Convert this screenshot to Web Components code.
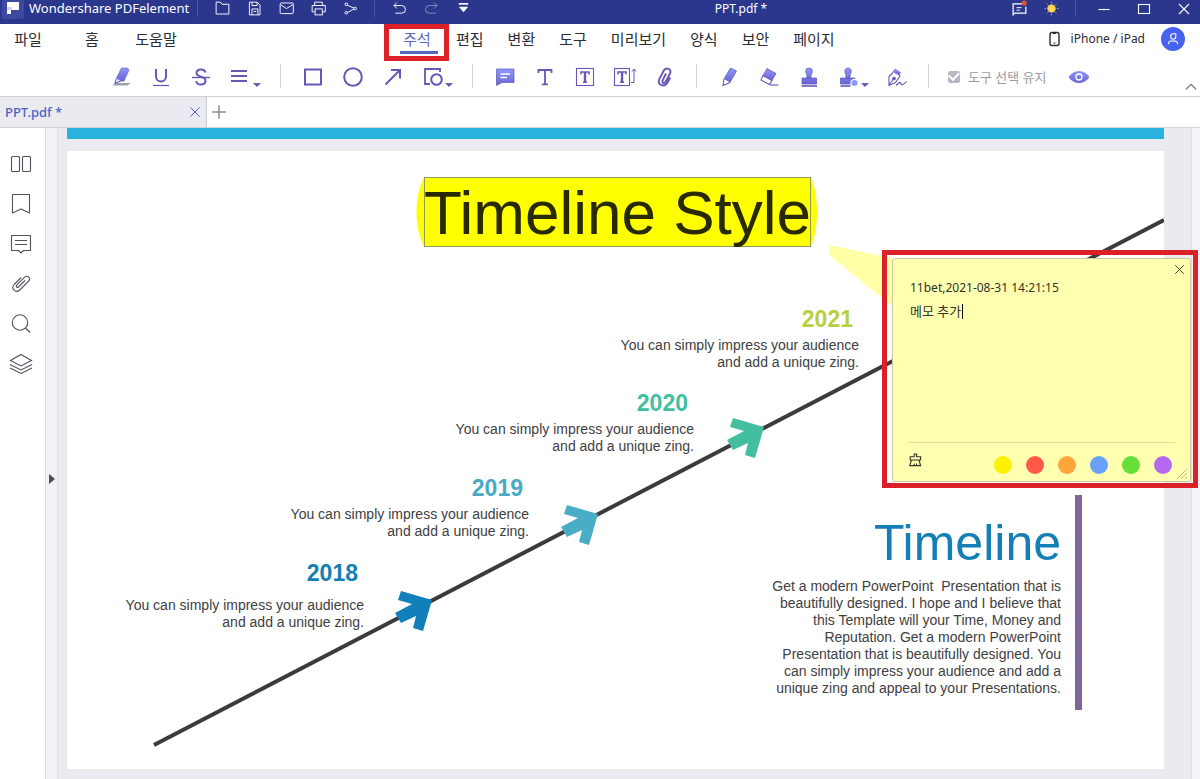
<!DOCTYPE html>
<html lang="ko">
<head>
<meta charset="utf-8">
<title>PPT.pdf * - Wondershare PDFelement</title>
<style>
  html, body { margin: 0; height: 100%; }
  body { font-family: "Noto Sans", "Noto Sans CJK KR", sans-serif; font-size: 13px; color: #2b2b33; background: #fff; }
</style>
</head>
<body>
<pdf-app></pdf-app>

<script>
const GRAD = '<defs><linearGradient id="g" x1="0" y1="0" x2="0" y2="1"><stop offset="0" stop-color="#8f97f6"/><stop offset="1" stop-color="#6b63d6"/></linearGradient></defs>';

/* Icon bodies on a 20 x 20 grid; stroke and fill come from the host's colour. */
const ICONS = {
  folder: '<path d="M2.500 16.500v-14h5l2 2.500h8v11.500z" stroke-linejoin="round"/>',
  save: '<path d="M4 17.500v-15h9l3.500 3.500v11.500z"/><path d="M7 2.500v4h6v-4M7 17.500v-7h7v7M9 13.500h3"/>',
  mail: '<rect x="2.500" y="3.500" width="15.500" height="12.500" rx="1.500"/><path d="M3 5.500l7 4.500 7.500-4.500"/>',
  print: '<path d="M5.500 6.500v-4h9v4M5.500 14h-3v-7.500h15.500v7.500h-3"/><rect x="6" y="10.500" width="8.500" height="7"/>',
  share: '<path d="M6 6l9 4-9 5"/><circle cx="5" cy="5" r="1.500" fill="#2a378d"/><circle cx="15.500" cy="10" r="1.500" fill="#2a378d"/><circle cx="5" cy="15" r="1.500" fill="#2a378d"/>',
  undo: '<path d="M7 3l-3.500 3.500 3.500 3.500M4 6.500h8.500a4.500 4.500 0 0 1 0 9h-7.500"/>',
  redo: '<path d="M13 3l3.500 3.500-3.500 3.500M16 6.500h-8.500a4.500 4.500 0 0 0 0 9h7.500" opacity=".45"/>',
  more: '<path d="M4.500 4.500h11" stroke-width="2"/><path d="M4.500 8h11l-5.500 6.500z" fill="currentColor" stroke="none"/>',
  message: '<path d="M13 4.500h-10.500v13l2-2h13v-8" stroke-width="1.400"/><path d="M6.500 9h6M6.500 12h4"/><circle cx="15.500" cy="3.500" r="3" fill="#e5532d" stroke="none"/>',
  sun: '<g stroke="#f3c24a"><circle cx="10" cy="10" r="4.500" fill="#ffd75c"/><path d="M10 2v1.500M10 16.500v1.500M2 10h1.500M16.500 10h1.500M4.300 4.300l1 1M14.700 14.700l1 1M15.700 4.300l-1 1M4.300 15.700l1-1"/></g>',
  minimize: '<path d="M4.500 10.500h11"/>',
  maximize: '<rect x="4.500" y="5.500" width="11" height="9"/>',
  close: '<path d="M5 5l10 10M15 5l-10 10"/>',
  phone: '<rect x="5" y="3.500" width="9" height="13" rx="2" stroke-width="1.400"/><path d="M8 4.500h3M8.500 14h2"/>',
  user: '<path d="M6.500 6a4 4 0 0 1 4-3.500h3.500v4a3.700 3.700 0 0 1-7.500 0zM3.500 17.500v-1a4 4 0 0 1 4-3.500h5a4 4 0 0 1 4 3.500v1" stroke-width="1.500"/>',
  highlight: GRAD + '<path d="M1 18.500l5-2.500h13.500l-3 2.500z" fill="#9ca0b4" stroke="none"/><path d="M10.500 1h6l1.500 2-5 11-5.500 0-2-3z" fill="url(#g)" stroke="#5c55b5" stroke-width=".6"/><path d="M5.500 11.500l-1.500 5 5.500-2.500" fill="#fff" stroke="#6a5ab8"/>',
  underline: '<path d="M5 2v7.500a5 5 0 0 0 10 0v-7.500" stroke-width="2"/><path d="M2 18.500h16" stroke-width="1.200"/>',
  strike: '<path d="M14.500 5.500c-.5-2-2-3-4.500-3s-4.500 1.300-4.500 3.500c0 5 9 2.500 9 7.500 0 2.500-2 4-4.500 4s-4.500-1.300-4.700-3.500" stroke-width="2"/><path d="M1 10.500h18" stroke-width="1.400"/>',
  lines: '<path d="M0 4h16M0 9h16M0 14h16" stroke-width="2"/>',
  square: '<rect x="2" y="2.500" width="16" height="15" stroke-width="2"/>',
  circle: '<circle cx="10" cy="10" r="8.800" stroke-width="2"/>',
  arrow: '<path d="M2.500 17.500l14.500-14.500M8 3h9v8.500" stroke-width="2"/>',
  shapes: '<path d="M17 5v-3h-15v15h5" stroke-width="1.800"/><circle cx="13.500" cy="12.500" r="5.300" stroke-width="2"/>',
  comment: GRAD + '<path d="M1.500 2h17.500v13.500h-12l-5.500 3z" fill="url(#g)" stroke="#5c55b5" stroke-width=".7"/><path d="M5.500 7h9.500M5.500 10.500h6.500" stroke="#fff" stroke-width="1.300"/>',
  text: '<path d="M3.500 6v-3h13v3M10 3v14M7 17.300h6" stroke-width="1.800"/>',
  textbox: '<rect x="1.500" y="1.500" width="17" height="17" stroke-width="1.100"/><path d="M6 7.500v-2.500h8v2.500M8 15.200h4" stroke-width="1.500"/><path d="M10 5v10" stroke-width="2.400"/>',
  textcall: '<rect x="-.5" y="1.500" width="15" height="17" stroke-width="1.100"/><path d="M3 7.500v-2.500h8v2.500M5 15.200h4" stroke-width="1.500"/><path d="M7 5v10" stroke-width="2.400"/><path d="M17 4.500l2-2.500 2 2.500M19 2v13.500h-3" stroke-width="1"/>',
  clip: '<path d="M11 6.500l-3.500 7c-.8 2.300 2 3.500 3.200 1.300l4.300-8.300c2-4.500-4-7-6.200-3l-4.600 8.800c-2.300 5.200 5 8.700 8 3.700l3-5.500" stroke-width="1.900"/>',
  pencil: GRAD + '<path d="M11.500 1l6 3-6.500 11.500-6-3.500z" fill="url(#g)" stroke="#5c55b5" stroke-width=".7"/><path d="M5 12l-1 6.500 7-3" fill="#fff"/>',
  eraser: GRAD + '<path d="M8 1.500l9 5-4 7-9-5z" fill="url(#g)" stroke="#5c55b5" stroke-width=".7"/><path d="M4 8.500l9 5-2.500 4-8.500-4.500z" fill="#fff"/><path d="M11 18h8.500"/>',
  stamp: GRAD + '<path d="M10 1a3.300 3.300 0 0 1 3.300 3.500c0 2-1.300 2-1.300 6.500h-4c0-4.500-1.300-4.500-1.300-6.500a3.300 3.300 0 0 1 3.300-3.500zM3 11h14.500v6h-14.500z" fill="url(#g)" stroke="#5c55b5" stroke-width=".7"/><path d="M2.500 19h15.500" stroke-width="1.600"/>',
  stampadd: GRAD + '<path d="M9 1a3 3 0 0 1 3.200 3.500c0 2-1.200 2-1.200 6.500h-4c0-4.500-1.200-4.500-1.200-6.500a3.200 3.200 0 0 1 3.200-3.500zM1.500 11h14.500v6h-14.500z" fill="url(#g)" stroke="#5c55b5" stroke-width=".7"/><path d="M1.500 19h10" stroke-width="1.600"/><circle cx="15.500" cy="16" r="3.600" fill="#8e9af2" stroke="#fff"/>',
  sign: GRAD + '<path d="M8 1.500l6 4-2 3-6.500-3.500z" fill="url(#g)" stroke="none"/><path d="M6 5.500l-4 4v9l6.500-3 4.500-6.500-1-1.500M2 18l4.500-6" /><circle cx="7" cy="11.500" r="1.300" fill="currentColor"/><path d="M9 18.500c3-3 5-4 5-2s2 2 5.500-2"/>',
  eye: GRAD + '<path d="M-.5 10c5.500-8 15.500-8 21 0-5.500 8-15.500 8-21 0z" fill="url(#g)" stroke="none"/><circle cx="10" cy="10" r="3" stroke="#fff" stroke-width="1.300"/>',
  chevron: '<path d="M4.500 12.500l5.500-5.500 5.500 5.500" stroke-width="1.400"/>',
  plus: '<path d="M10 2.500v15M2.500 10h15" stroke-width="1.600"/>',
  thumbs: '<rect x="0.500" y="2.500" width="8" height="15" rx="1"/><rect x="11.500" y="2.500" width="8" height="15" rx="1"/>',
  bookmark: '<path d="M1.500 .5h17v18.500l-8.500-4-8.500 4z" stroke-linejoin="round"/>',
  notes: '<path d="M.5 1.500h19v15h-7l-2.500 2.500-2.500-2.500h-7z" stroke-linejoin="round"/><path d="M4 6.500h12M4 10.500h12"/>',
  attach: '<path d="M14 6.500l-6.500 6.500c-1.200 1.200-3-.6-1.800-1.800l8-8c3-2.600 6.500 1 4 4l-9 8.800c-4 3.600-9.200-1.500-5.500-5.500l7-7"/>',
  search: '<circle cx="9" cy="8.500" r="7.700"/><path d="M14.500 14l4.500 4.500" stroke-width="1.300"/>',
  layers: '<path d="M10 .5l10.500 6-10.500 5.500-10.500-5.500zM-1 10.500l11 5.500 11-5.500M-1 14l11 5.500 11-5.500"/>',
  brush: '<path d="M9 6v-3.500h3v3.500h5v4h-13v-4zM5.500 10l-2 7h13.500l-2-7M8.500 17l1-2.500M12 17v-2.500" stroke-width="1.400"/>'
};

const RESET = `
  button, a { font: inherit; color: inherit; background: none; border: 0; padding: 0; margin: 0; text-decoration: none; cursor: pointer; display: inline-flex; align-items: center; justify-content: center; white-space: nowrap; }
`;

function define(name, html, setup) {
  const template = document.createElement('template');
  template.innerHTML = '<style>:host, * { box-sizing: border-box; }</style>' + html;
  customElements.define(name, class extends HTMLElement {
    connectedCallback() {
      if (this.shadowRoot) return;
      const content = template.content.cloneNode(true);
      if (setup) setup.call(this, content);
      this.attachShadow({ mode: 'open' }).append(content);
    }
  });
}

define('ui-icon', `
  <style>
    :host { display: inline-flex; flex: none; width: var(--icon-size, 20px); height: var(--icon-size, 20px); }
    svg { width: 100%; height: 100%; overflow: visible; fill: none; stroke: currentColor; stroke-width: 1.100; }
  </style>
  <svg viewBox="0 0 20 20" aria-hidden="true"></svg>`,
  function (root) { root.querySelector('svg').innerHTML = ICONS[this.getAttribute('name')] || ''; });

define('icon-button', `
  <style>${RESET}
    :host { display: inline-flex; flex: none; width: 32px; }
    button { width: 100%; height: 100%; }
    i { display: none; }
    :host([menu]) button { justify-content: flex-start; padding-left: 10px; gap: 2px; }
    :host([menu]) i { display: block; border: 4px solid transparent; border-top-color: currentColor; border-bottom: 0; margin-top: 16px; }
  </style>
  <button type="button"><ui-icon></ui-icon><i></i></button>`,
  function (root) {
    root.querySelector('button').setAttribute('aria-label', this.getAttribute('label'));
    root.querySelector('ui-icon').setAttribute('name', this.getAttribute('icon'));
  });

define('title-bar', `
  <style>${RESET}
    :host { display: flex; height: 24px; padding-bottom: 7px; background: #2a378d; color: #fff; font-size: 13px; line-height: 17px; }
    .logo { flex: none; width: 24px; height: 16px; margin-right: 5px; }
    .logo svg { display: block; width: 24px; height: 19px; }
    .brand { width: 168px; white-space: nowrap; }
    .sep { flex: none; width: 1px; margin: 0 8px; background: #4a56a3; }
    .sep.first { margin-left: 0; }
    .file { flex: 1; text-align: center; font-size: 12px; }
    icon-button { height: 17px; --icon-size: 17px; }
    .win { width: 40px; --icon-size: 20px; }
    .win:last-child { width: 36px; padding-left: 4px; }
  </style>
  <span class="logo"><svg viewBox="0 0 24 19"><path d="M2 0h22v16a3 3 0 0 1-3 3h-16a3 3 0 0 1-3-3z" fill="#3d499f"/><path d="M7 2h12v8h-8v4h-4z" fill="#fff"/><path d="M7 7h5v3h-5z" fill="#cdd2f5"/></svg></span>
  <span class="brand">Wondershare PDFelement</span>
  <span class="sep first"></span>
  <icon-button icon="folder" label="열기"></icon-button>
  <icon-button icon="save" label="저장"></icon-button>
  <icon-button icon="mail" label="메일"></icon-button>
  <icon-button icon="print" label="인쇄"></icon-button>
  <icon-button icon="share" label="공유"></icon-button>
  <span class="sep"></span>
  <icon-button icon="undo" label="실행 취소"></icon-button>
  <icon-button icon="redo" label="다시 실행"></icon-button>
  <icon-button icon="more" label="더 보기"></icon-button>
  <span class="file">PPT.pdf *</span>
  <icon-button icon="message" label="메시지"></icon-button>
  <icon-button icon="sun" label="테마"></icon-button>
  <span class="sep"></span>
  <icon-button class="win" icon="minimize" label="최소화"></icon-button>
  <icon-button class="win" icon="maximize" label="최대화"></icon-button>
  <icon-button class="win" icon="close" label="닫기"></icon-button>`);

define('menu-bar', `
  <style>${RESET}
    :host { display: flex; height: 37px; font-size: 15px; line-height: 20px; }
    .start { display: flex; gap: 8px; width: 384px; }
    .start button { width: 56px; }
    button { height: 30px; }
    nav { display: flex; gap: 24px; }
    .mark { border: 5px solid #db2027; width: 65px; height: 37px; margin-right: -17px; display: flex; padding: 0 6px 0 11px; }
    .mark button { flex: 1; height: 25px; padding: 0 4px 3px 0; border-bottom: 3px solid #5868be; color: #5868be; }
    .end { display: flex; align-items: center; gap: 6px; height: 30px; margin-left: auto; padding-right: 15px; font-size: 12px; }
    .end button { height: 24px; gap: 6px; }
    .end .user { width: 24px; margin-left: 10px; border-radius: 12px; background: #4762ee; color: #fff; --icon-size: 14px; }
  </style>
  <div class="start"><button type="button">파일</button><button type="button">홈</button><button type="button">도움말</button></div>
  <nav>
    <div class="mark"><button type="button" aria-current="page">주석</button></div>
    <button type="button">편집</button><button type="button">변환</button><button type="button">도구</button>
    <button type="button">미리보기</button><button type="button">양식</button><button type="button">보안</button><button type="button">페이지</button>
  </nav>
  <div class="end">
    <button type="button"><ui-icon name="phone"></ui-icon>iPhone / iPad</button>
    <button type="button" class="user" aria-label="계정"><ui-icon name="user"></ui-icon></button>
  </div>`);

define('tool-ribbon', `
  <style>${RESET}
    :host { display: flex; height: 36px; padding-left: 101px; padding-bottom: 4px; color: #6a55b8; border-bottom: 1px solid #cfcfd4; }
    icon-button { width: 40px; }
    icon-button[menu] { width: 48px; }
    .sep { flex: none; width: 1px; height: 24px; margin: 3px 12px 0 11px; background: #d2d2d8; }
    label { display: flex; align-items: center; gap: 8px; margin: 0 12px 0 7px; color: #9b9ba3; font-size: 13px; white-space: nowrap; }
    input { appearance: none; width: 12px; height: 12px; margin: 0; border-radius: 2px; background: #b7b8c6; display: grid; place-items: center; }
    input:checked::after { content: ""; width: 8px; height: 5px; border: solid #fff; border-width: 0 0 2px 2px; transform: rotate(-45deg) translate(1px, -1px); }
    .fold { width: 18px; height: 32px; margin-left: auto; padding-top: 20px; color: #77777f; --icon-size: 18px; }
  </style>
  <icon-button icon="highlight" label="강조"></icon-button>
  <icon-button icon="underline" label="밑줄"></icon-button>
  <icon-button icon="strike" label="취소선"></icon-button>
  <icon-button icon="lines" label="줄" menu></icon-button>
  <span class="sep"></span>
  <icon-button icon="square" label="사각형"></icon-button>
  <icon-button icon="circle" label="원"></icon-button>
  <icon-button icon="arrow" label="화살표"></icon-button>
  <icon-button icon="shapes" label="도형" menu></icon-button>
  <span class="sep"></span>
  <icon-button icon="comment" label="메모"></icon-button>
  <icon-button icon="text" label="텍스트"></icon-button>
  <icon-button icon="textbox" label="텍스트 상자"></icon-button>
  <icon-button icon="textcall" label="설명선"></icon-button>
  <icon-button icon="clip" label="첨부"></icon-button>
  <span class="sep"></span>
  <icon-button icon="pencil" label="연필"></icon-button>
  <icon-button icon="eraser" label="지우개"></icon-button>
  <icon-button icon="stamp" label="스탬프"></icon-button>
  <icon-button icon="stampadd" label="스탬프 만들기" menu></icon-button>
  <icon-button icon="sign" label="서명"></icon-button>
  <span class="sep"></span>
  <label for="keep"><input id="keep" type="checkbox" checked>도구 선택 유지</label>
  <icon-button icon="eye" label="보기"></icon-button>
  <icon-button class="fold" icon="chevron" label="접기"></icon-button>`);

define('document-tabs', `
  <style>${RESET}
    :host { display: flex; height: 31px; border-bottom: 1px solid #d3d4dc; }
    .tab { display: flex; align-items: center; width: 207px; padding: 0 3px 0 5px; background: #eaebf1; border-right: 1px solid #c9cad3; color: #4a62c4; }
    .tab a { margin-right: auto; font-weight: 500; }
    icon-button { width: 16px; --icon-size: 18px; }
    .add { width: 24px; color: #8a8a92; --icon-size: 18px; }
  </style>
  <div class="tab"><a href="#ppt">PPT.pdf *</a><icon-button icon="close" label="탭 닫기"></icon-button></div>
  <icon-button class="add" icon="plus" label="새 탭"></icon-button>`);

define('side-rail', `
  <style>
    :host { display: flex; flex: none; color: #50525c; }
    nav { display: flex; flex-direction: column; width: 46px; padding-top: 16px; border-right: 1px solid #d9dae0; }
    nav icon-button { width: 42px; height: 40px; }
    .grip { display: flex; width: 12px; padding-top: 50px; background: #f3f3f5; border-right: 1px solid #dfe0e8; align-items: center; justify-content: center; }
    .grip svg { width: 6px; height: 10px; }
  </style>
  <nav>
    <icon-button icon="thumbs" label="축소판"></icon-button>
    <icon-button icon="bookmark" label="책갈피"></icon-button>
    <icon-button icon="notes" label="주석 목록"></icon-button>
    <icon-button icon="attach" label="첨부 파일"></icon-button>
    <icon-button icon="search" label="검색"></icon-button>
    <icon-button icon="layers" label="레이어"></icon-button>
  </nav>
  <div class="grip"><svg viewBox="0 0 6 10"><path d="M0 0l6 5-6 5z" fill="#4c4d55"/></svg></div>`);

define('timeline-step', `
  <style>
    :host { display: block; position: absolute; width: 260px; text-align: right; font: 14px/17px "Liberation Sans", Arial, sans-serif; color: #404042; }
    h3 { margin: 0 6px 0 0; font-size: 23px; line-height: 26px; color: var(--year); }
    p { margin: var(--lead, 5px) 0 0; white-space: pre-line; }
  </style><h3><slot name="year"></slot></h3><p><slot></slot></p>`);

define('slide-page', `
  <style>
    :host { display: block; position: relative; height: 618px; background: #fff; overflow: hidden; font-family: "Liberation Sans", Arial, sans-serif; color: #404042; }
    svg { position: absolute; inset: 0; width: 1097px; height: 618px; }
    h1 { position: absolute; left: 357px; top: 26px; width: 387px; height: 70px; margin: 0; border: 1px solid #8f9a5c; display: flex; justify-content: center; font-size: 62px; font-weight: 400; line-height: 70px; color: #2a2a00; white-space: nowrap; }
    .about { position: absolute; left: 694px; top: 344px; width: 321px; height: 215px; padding: 20px 14px 0 0; border-right: 7px solid #80659b; text-align: right; white-space: nowrap; }
    h2 { margin: 0; font-size: 50px; font-weight: 400; line-height: 56px; color: #137fb5; }
    .about p { margin: 7px 0 0; font-size: 14px; line-height: 17px; white-space: pre; }
  </style>
  <svg viewBox="0 0 1097 618" aria-hidden="true">
    <path d="M357 26c-10 20-10 50 0 70h387c8-20 8-50 0-70z" fill="#ff0"/>
    <path d="M762 94l63 13v48l-63-51z" fill="#ffffa6"/>
    <path d="M87 594L1097 69" stroke="#3b3b3d" stroke-width="4"/>
    <defs><path id="head" d="M334 440l31 9-9 31-10-3 3-12-15 7-6-10 17-9-14-4z"/></defs>
    <use href="#head" fill="#117fb9"/>
    <use href="#head" x="166" y="-86" fill="#4aadc6"/>
    <use href="#head" x="332" y="-173" fill="#43bfa0"/>
  </svg>
  <h1>Timeline Style</h1>
  <slot></slot>
  <div class="about"><h2>Timeline</h2><p>Get a modern PowerPoint  Presentation that is
beautifully designed. I hope and I believe that
this Template will your Time, Money and
Reputation. Get a modern PowerPoint
Presentation that is beautifully designed. You
can simply impress your audience and add a
unique zing and appeal to your Presentations.</p></div>`);

define('sticky-note', `
  <style>${RESET}
    :host { display: block; width: 316px; height: 238px; border: 5px solid #db2027; padding: 3px 2px 1px 5px; }
    .paper { position: relative; display: flex; flex-direction: column; height: 224px; padding: 0 15px 0 14px; background: #ffffb0; border: 1px solid #c9c99a; border-radius: 3px; color: #33332a; }
    .close { align-self: flex-end; width: 16px; height: 20px; margin-right: -12px; --icon-size: 17px; }
    .meta { height: 18px; padding-left: 3px; line-height: 18px; font-size: 12px; }
    .body { position: relative; flex: 1; display: flex; padding-left: 3px; margin-top: 4px; }
    textarea { flex: 1; border: 0; outline: 0; resize: none; background: none; padding: 0; margin: 0; font: inherit; color: inherit; line-height: 20px; }
    .caret { position: absolute; left: 55px; top: 3px; width: 1px; height: 15px; background: #000; }
    .foot { display: flex; align-items: center; gap: 14px; height: 39px; padding: 6px 3px 0 0; border-top: 1px solid #dedf9d; }
    .foot icon-button { width: 16px; height: 20px; margin-right: auto; margin-bottom: 10px; --icon-size: 16px; }
    .dot { width: 18px; height: 18px; border-radius: 9px; }
    .size { position: absolute; right: 3px; bottom: 2px; width: 10px; height: 10px; }
  </style>
  <div class="paper">
    <icon-button class="close" icon="close" label="닫기"></icon-button>
    <label class="meta" for="memo">11bet,2021-08-31 14:21:15</label>
    <div class="body"><textarea id="memo" spellcheck="false">메모 추가</textarea><span class="caret"></span></div>
    <div class="foot">
      <icon-button icon="brush" label="지우기"></icon-button>
      <button class="dot" type="button" aria-label="노랑" style="background:#fff200"></button>
      <button class="dot" type="button" aria-label="빨강" style="background:#ff5a47"></button>
      <button class="dot" type="button" aria-label="주황" style="background:#ffa53c"></button>
      <button class="dot" type="button" aria-label="파랑" style="background:#68a0fa"></button>
      <button class="dot" type="button" aria-label="초록" style="background:#66e038"></button>
      <button class="dot" type="button" aria-label="보라" style="background:#b468ee"></button>
    </div>
    <svg class="size" viewBox="0 0 10 10"><path d="M0 10L10 0M4 10l6-6M8 10l2-2" stroke="#bdbd86"/></svg>
  </div>`);

define('pdf-app', `
  <style>
    :host { display: flex; flex-direction: column; height: 100vh; overflow: hidden; }
    title-bar, menu-bar, tool-ribbon, document-tabs { flex: none; }
    main { position: relative; flex: 1; display: flex; min-height: 0; }
    .view { flex: 1; min-width: 0; overflow: hidden; padding: 0 27px 0 9px; background: #eaebf1; }
    .previous { height: 11px; margin-bottom: 12px; background: #29b2dd; }
    .scroll { flex: none; width: 9px; background: #f4f4f6; border-left: 1px solid #dddde6; }
    sticky-note { position: absolute; right: 2px; top: 122px; }
    .y18 { left: 37px; top: 409px; --year: #137fb5; --lead: 11px; }
    .y19 { left: 202px; top: 324px; --year: #4aa9c4; }
    .y20 { left: 367px; top: 239px; --year: #43bfa0; }
    .y21 { left: 532px; top: 155px; --year: #b9d03e; }
  </style>
  <title-bar></title-bar>
  <menu-bar></menu-bar>
  <tool-ribbon></tool-ribbon>
  <document-tabs></document-tabs>
  <main>
    <side-rail></side-rail>
    <div class="view">
      <div class="previous"></div>
      <slide-page>
        <timeline-step class="y21"><span slot="year">2021</span>You can simply impress your audience
and add a unique zing.</timeline-step>
        <timeline-step class="y20"><span slot="year">2020</span>You can simply impress your audience
and add a unique zing.</timeline-step>
        <timeline-step class="y19"><span slot="year">2019</span>You can simply impress your audience
and add a unique zing.</timeline-step>
        <timeline-step class="y18"><span slot="year">2018</span>You can simply impress your audience
and add a unique zing.</timeline-step>
      </slide-page>
    </div>
    <div class="scroll"></div>
    <sticky-note></sticky-note>
  </main>`);
</script>
</body>
</html>
